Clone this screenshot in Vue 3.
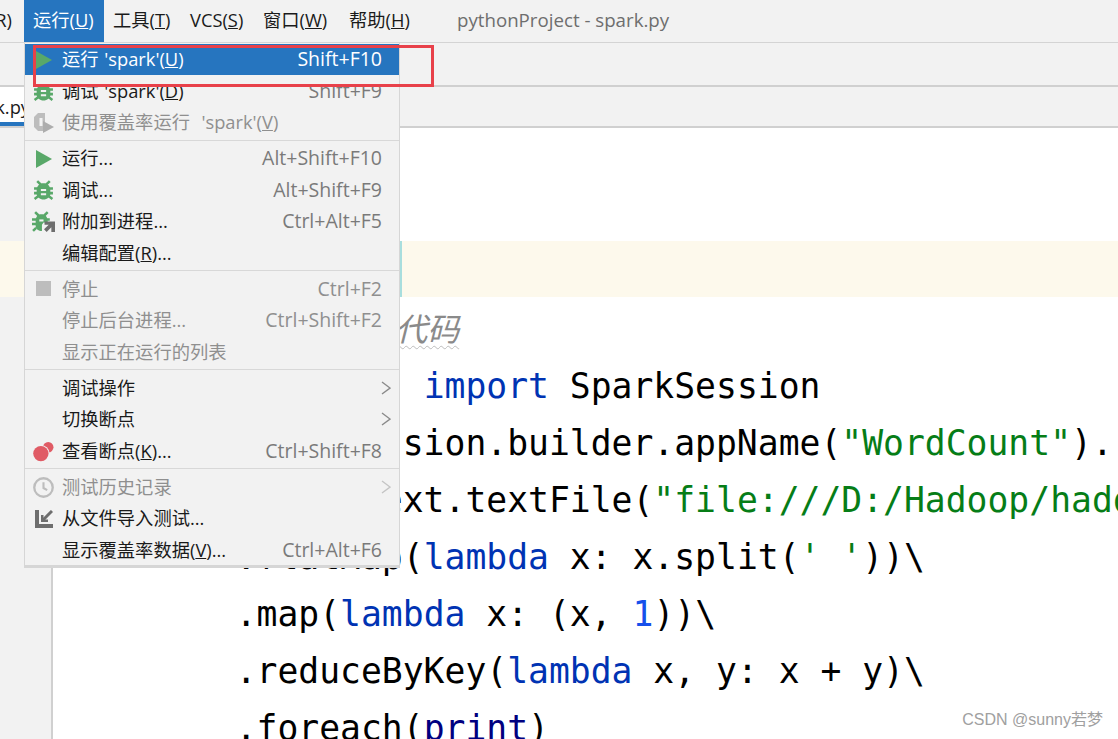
<script setup>
const top = [
  { zh: '工具', key: 'T', w: 77 },
  { zh: 'VCS', key: 'S', w: 73 },
  { zh: '窗口', key: 'W', w: 86 },
  { zh: '帮助', key: 'H', w: 108 },
]
const groups = [
  [
    { text: "运行 'spark'(", key: 'U', tail: ')', sc: 'Shift+F10', icon: 'run', active: true },
    { text: "调试 'spark'(", key: 'D', tail: ')', sc: 'Shift+F9', icon: 'bug' },
    { text: "使用覆盖率运行  'spark'(", key: 'V', tail: ')', icon: 'cover', off: true },
  ],
  [
    { text: '运行...', sc: 'Alt+Shift+F10', icon: 'run' },
    { text: '调试...', sc: 'Alt+Shift+F9', icon: 'bug' },
    { text: '附加到进程...', sc: 'Ctrl+Alt+F5', icon: 'attach' },
    { text: '编辑配置(', key: 'R', tail: ')...' },
  ],
  [
    { text: '停止', sc: 'Ctrl+F2', icon: 'stop', off: true, scOff: true },
    { text: '停止后台进程...', sc: 'Ctrl+Shift+F2', off: true, scOff: true },
    { text: '显示正在运行的列表', off: true },
  ],
  [
    { text: '调试操作', arrow: true },
    { text: '切换断点', arrow: true },
    { text: '查看断点(', key: 'K', tail: ')...', sc: 'Ctrl+Shift+F8', icon: 'dots' },
  ],
  [
    { text: '测试历史记录', icon: 'clock', off: true, arrow: true },
    { text: '从文件导入测试...', icon: 'import' },
    { text: '显示覆盖率数据(', key: 'V', tail: ')...', sc: 'Ctrl+Alt+F6' },
  ],
]
</script>

<template>
  <div class="page">
    <header class="menubar">
      <span class="clip"><span>R)</span></span>
      <span class="top active">运行(<u>U</u>)</span>
      <span v-for="t in top" :key="t.key" class="top" :style="{ width: t.w + 'px' }">{{ t.zh }}(<u>{{ t.key }}</u>)</span>
      <span class="title">pythonProject - spark.py</span>
    </header>
    <div class="toolbar"></div>
    <div class="tabs">
      <div class="tab"><span>spark.py</span></div>
    </div>
    <main class="body">
      <aside class="gutter"></aside>
      <pre class="code"><div class="ln first"> </div><div class="ln"> </div><div class="ln hl"> </div><div class="ln cm"># <span class="wave">统计单词数量的示例代码</span></div><div class="ln">from pyspark.sql <b>import</b> SparkSession</div><div class="ln">spark = SparkSession.builder.appName(<i>"WordCount"</i>).</div><div class="ln">rdd = sparkContext.textFile(<i>"file:///D:/Hadoop/hadoop/README.txt"</i>)\</div><div class="ln">        .flatMap(<b>lambda</b> x: x.split(<i>' '</i>))\</div><div class="ln">        .map(<b>lambda</b> x: (x, <em>1</em>))\</div><div class="ln">        .reduceByKey(<b>lambda</b> x, y: x + y)\</div><div class="ln">        .foreach(<s>print</s>)</div></pre>
    </main>

    <nav class="menu">
      <template v-for="(g, gi) in groups" :key="gi">
        <div v-if="gi" class="sep"></div>
        <div v-for="(m, i) in g" :key="i" class="row" :class="{ active: m.active, off: m.off }">
          <span class="ico">
            <svg v-if="m.icon === 'run'" viewBox="0 0 16 18" width="16" height="18"><path d="M0 0 L16 9 L0 18 Z" fill="#59a869"/></svg>
            <svg v-else-if="m.icon === 'bug'" viewBox="0 0 20 20" width="21" height="21"><g fill="none" stroke="#59a869" stroke-width="2.400"><path d="M1 8h18M1 12.500h18M1.500 18l4-3M18.500 18l-4-3M4 1l3.500 3.500M16 1l-3.500 3.500"/></g><path d="M10 3c3.500 0 6.500 2.500 6.500 6.500v3.500c0 3-3 5.500-6.500 5.500s-6.500-2.500-6.500-5.500V9.500C3.500 5.500 6.500 3 10 3Z" fill="#59a869"/><path d="M7.500 8.500h5v2h-5zM7.500 12.500h5v2h-5z" fill="#f2f2f2"/></svg>
            <svg v-else-if="m.icon === 'attach'" viewBox="0 0 22 22" width="23" height="23"><g fill="none" stroke="#59a869" stroke-width="2.400"><path d="M0 9h17M0 13.500h8M1 20l3-3M3 2l3.500 3.500M15 2l-3.500 3.500"/></g><path d="M9 4c3.500 0 6 2.500 6 6.500v1.500h-4l-1.500 2v6c-3 0-6-1.500-6-5V10.500C3.500 6.500 5.500 4 9 4Z" fill="#59a869"/><path d="M7 9h4v2H7z" fill="#f2f2f2"/><path d="M12 11h10v10h-3.500v-4.500L14 21l-2.500-2.500 4.500-4.500h-4Z" fill="#6e6e6e"/></svg>
            <svg v-else-if="m.icon === 'cover'" viewBox="0 0 22 22" width="22" height="22"><path d="M12 1H5L1 5v10l4 4h7V1Z" fill="#bdbdbd"/><path d="M6.500 6h3v8h-3z" fill="#f2f2f2"/><path d="M10 9 L21 15 L10 21 Z" fill="#adadad"/></svg>
            <span v-else-if="m.icon === 'stop'" class="stop"></span>
            <svg v-else-if="m.icon === 'dots'" viewBox="0 0 20 20" width="21" height="21"><circle cx="14.500" cy="6" r="5" fill="#e05b65"/><circle cx="7.500" cy="12" r="8.300" fill="#f2f2f2"/><circle cx="7.500" cy="12" r="7.300" fill="#e05b65"/></svg>
            <svg v-else-if="m.icon === 'clock'" viewBox="0 0 20 20" width="21" height="21"><circle cx="10" cy="10" r="8.800" fill="none" stroke="#bdbdbd" stroke-width="2.200"/><path d="M10 5v5.500l3.500 2" fill="none" stroke="#bdbdbd" stroke-width="2"/></svg>
            <svg v-else-if="m.icon === 'import'" viewBox="0 0 18 18" width="18" height="18"><path d="M0 0h4v14h14v4H0Z" fill="#6e6e6e"/><path d="M17 1 8 10" fill="none" stroke="#6e6e6e" stroke-width="3"/><path d="M6 5v7h7v-2.500H8.500V5Z" fill="#6e6e6e"/></svg>
          </span>
          <span class="label">{{ m.text }}<u v-if="m.key">{{ m.key }}</u>{{ m.tail }}</span>
          <span v-if="m.sc" class="sc" :class="{ soff: m.scOff }">{{ m.sc }}</span>
          <svg v-if="m.arrow" class="arrow" viewBox="0 0 10 14" width="10" height="14"><path d="M1 1 9 7 1 13" fill="none" stroke="#8a8a8a" stroke-width="1.400"/></svg>
        </div>
      </template>
    </nav>
    <div class="cut"></div>
    <div class="redbox"></div>
    <div class="mark">CSDN @sunny若梦</div>
  </div>
</template>

<style>
html, body { margin: 0; background: #fff; overflow: hidden; }
</style>

<style scoped>
.page {
  position: relative;
  width: 1118px;
  height: 739px;
  overflow: hidden;
  background: #fff;
  font-family: "Open Sans", "Noto Sans CJK SC", sans-serif;
  font-size: 18.300px;
  color: #1a1a1a;
}
.menubar {
  height: 43px;
  box-sizing: border-box;
  border-bottom: 1px solid #d4d4d4;
  background: #f2f2f2;
  display: flex;
  align-items: stretch;
  line-height: 40px;
  white-space: nowrap;
}
.clip { width: 24px; box-sizing: border-box; padding-right: 12px; overflow: hidden; display: flex; justify-content: flex-end; }
.top { box-sizing: border-box; padding-left: 9px; }
.top.active { width: 80px; background: #2675bf; color: #fff; height: 42px; }
.title { color: #6e6e6e; font-size: 18.700px; margin-left: 9px; }
.toolbar { height: 44px; box-sizing: border-box; background: #f2f2f2; border-bottom: 2px solid #d0d0d0; }
.tabs { height: 41px; box-sizing: border-box; background: #f2f2f2; border-bottom: 2px solid #d0d0d0; }
.tab {
  width: 60px;
  height: 39px;
  box-sizing: border-box;
  background: #fff;
  border-bottom: 4px solid #2675bf;
  padding-right: 30px;
  display: flex;
  justify-content: flex-end;
  overflow: hidden;
  line-height: 40px;
}
.body { display: flex; height: 611px; }
.gutter { width: 53px; flex: none; box-sizing: border-box; background: #f2f2f2; border-right: 2px solid #d0d0d0; }
.code {
  margin: 0 0 0 -53px;
  flex: 1;
  min-width: 0;
  font-family: "DejaVu Sans Mono", "Noto Sans CJK SC", monospace;
  font-size: 34.700px;
  line-height: 63px;
  color: #000;
  position: relative;
  overflow: hidden;
}
.ln { height: 57px; padding-left: 68.600px; white-space: pre; }
.first { height: 56px; }
.hl { background: #fdf9ec; height: 56px; position: relative; }
.hl::after { content: ""; position: absolute; left: 400px; top: 0; bottom: 0; width: 2px; background: #a8dede; }
.cm { color: #8a8a8a; font-style: italic; font-size: 32px; margin-top: 1px; line-height: 64px; }
.wave { text-decoration: underline wavy #bdbdbd 1px; text-underline-offset: 4px; }
.code b { font-weight: 400; color: #0033b3; }
.code i { font-style: normal; color: #067d17; }
.code em { font-style: normal; color: #1750eb; }
.code s { text-decoration: none; color: #000080; }

.menu {
  position: absolute;
  left: 24px;
  top: 42px;
  width: 376px;
  height: 526px;
  box-sizing: border-box;
  padding: 1px 0;
  background: #f2f2f2;
  border: 1px solid #d6d6d6;
  border-bottom-width: 3px;
  font-size: 18.300px;
}
.row {
  height: 31.500px;
  box-sizing: border-box;
  display: flex;
  align-items: center;
  padding: 0 17px 2px 37px;
  position: relative;
  line-height: 29.500px;
  white-space: pre;
}
.row.active { background: #2675bf; color: #fff; }
.row.off .label { color: #8f8f8f; }
.ico { position: absolute; left: 6.500px; top: 0; bottom: 0; width: 24px; display: flex; align-items: center; justify-content: center; }
.label { flex: 1; word-spacing: 1px; }
.sc { color: #7a7a7a; font-size: 19.500px; }
.row.active .sc { color: #fff; }
.soff { color: #8f8f8f; }
.stop { width: 15px; height: 15px; background: #bdbdbd; display: block; margin-top: -2px; }
.arrow { position: absolute; right: 8px; top: 8px; }
.row.off .arrow path { stroke: #c4c4c4; }
.sep { height: 1px; background: #d8d8d8; margin: 1px 0 2.500px; }
.cut { position: absolute; left: 25px; top: 75px; width: 374px; height: 9px; background: #f2f2f2; }
.redbox {
  position: absolute;
  left: 33px;
  top: 45px;
  width: 401px;
  height: 42px;
  box-sizing: border-box;
  border: 3px solid #e8414a;
}
.mark {
  position: absolute;
  right: 15px;
  bottom: 9px;
  font-family: "Liberation Sans", "Noto Sans CJK SC", sans-serif;
  font-size: 16px;
  color: #a0a0a0;
}
</style>
